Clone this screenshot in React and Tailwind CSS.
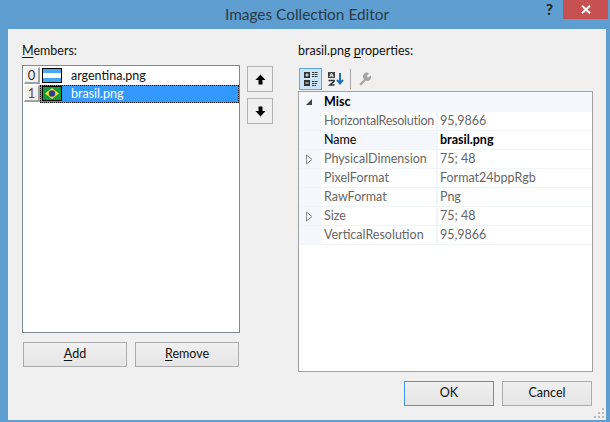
function U({ children }) {
  return <span className="underline underline-offset-2">{children}</span>;
}

function Btn({ children, className = "" }) {
  return (
    <div className={"flex items-center justify-center h-[25px] border border-[#acacac] bg-gradient-to-b from-[#f0f0f0] to-[#e5e5e5] text-[#111] " + className}>
      {children}
    </div>
  );
}

function Argentina() {
  return (
    <svg width="20" height="15" viewBox="0 0 20 15" className="block shrink-0">
      <rect width="20" height="15" fill="#000" />
      <rect x="1" y="1" width="18" height="13" fill="#fff" />
      <rect x="1" y="1" width="18" height="4" fill="#4aa8f0" />
      <rect x="1" y="10" width="18" height="4" fill="#4aa8f0" />
    </svg>
  );
}

function Brazil() {
  return (
    <svg width="20" height="15" viewBox="0 0 20 15" className="block shrink-0">
      <rect width="20" height="15" fill="#000" />
      <rect x="1" y="1" width="18" height="13" fill="#129a3c" />
      <polygon points="10,2 17,7.5 10,13 3,7.5" fill="#f4dc28" />
      <circle cx="10" cy="7.5" r="3.2" fill="#2f3f8f" />
    </svg>
  );
}

function RowHead({ n, amber }) {
  return (
    <div className={"w-[16px] h-[17px] shrink-0 flex items-center justify-center bg-[#f0f0f0] border-r-2 border-b-2 border-[#a0a0a0] border-l border-t border-l-white border-t-white text-[13px] leading-none " + (amber ? "text-[#7a4a10]" : "text-[#333]")}>
      {n}
    </div>
  );
}

function Triangle() {
  return (
    <svg width="9" height="11" viewBox="0 0 9 11" className="block">
      <path d="M1.5 1 L7 5.5 L1.5 10 Z" fill="#fff" stroke="#8a8a8a" />
    </svg>
  );
}

function PropRow({ name, value, expand, strong, tight }) {
  return (
    <div className="flex h-[19px] border-b border-[#f1f4fa]">
      <div className="w-[22px] shrink-0 bg-[#f5f7fc] flex items-center justify-center pr-[2px]">
        {expand && <Triangle />}
      </div>
      <div className={"w-[117px] shrink-0 pl-[3px] border-r-2 border-[#f1f4fa] leading-[17px] whitespace-nowrap " + (tight ? "tracking-[-0.25px] " : "") + (strong ? "bg-[#f5f7fc] text-black" : "text-[#666]")}>
        {name}
      </div>
      <div className={"pl-[2px] leading-[17px] " + (strong ? "font-bold text-black" : "text-[#666]")}>{value}</div>
    </div>
  );
}

export default function App() {
  return (
    <div className="w-[610px] h-[422px] overflow-hidden flex flex-col bg-[#5e9ed0] text-[12.5px] text-[#111]" style={{ fontFamily: 'Lato, sans-serif' }}>
      <div className="h-[29px] shrink-0 flex items-start relative">
        <div className="flex-1 text-center text-[15.4px] leading-[28px] text-[#2b3a48] pl-[4px]">
          Images Collection Editor
        </div>
        <div className="absolute right-[57px] top-0 text-[16px] font-bold leading-[18px] text-[#222]">?</div>
        <div className="absolute right-[2px] top-0 w-[45px] h-[19px] bg-[#c75050] flex items-center justify-center">
          <svg width="10" height="9" viewBox="0 0 10 9"><path d="M1 .8 L9 8.2 M9 .8 L1 8.2" stroke="#fff" strokeWidth="2" /></svg>
        </div>
      </div>

      <div className="ml-[8px] mr-[4px] h-[391px] bg-[#f0f0f0] flex pl-[14px] pr-[13px] pt-[14px] relative">
        <div className="w-[218px] shrink-0 flex flex-col">
          <div className="h-[22px] leading-[16px]"><U>M</U>embers:</div>
          <div className="h-[268px] border border-[#828790] bg-white pt-[1px] pl-[1px]">
            <div className="flex h-[18px] items-start">
              <RowHead n="0" />
              <div className="ml-[2px] mt-[1px]"><Argentina /></div>
              <div className="pl-[9px] leading-[18px] text-[#111]">argentina.png</div>
            </div>
            <div className="flex h-[18px] items-start">
              <RowHead n="1" amber />
              <div className="flex-1 h-[18px] flex items-start bg-[#3399ff] border border-dotted border-black text-white pl-[1px]">
                <Brazil />
                <div className="pl-[9px] leading-[16px]">brasil.png</div>
              </div>
            </div>
          </div>
          <div className="flex gap-[8px] mt-[9px] pl-[1px]">
            <Btn className="w-[104px]"><span><U>A</U>dd</span></Btn>
            <Btn className="w-[104px]"><span><U>R</U>emove</span></Btn>
          </div>
        </div>

        <div className="w-[58px] shrink-0 pl-[7px] pt-[23px] flex flex-col gap-[6px]">
          <div className="w-[26px] h-[26px] border border-[#b4b4b4] bg-[#f0f0f0] flex items-center justify-center">
            <svg width="11" height="11" viewBox="0 0 11 11"><path d="M5.5 .5 L10.5 6 H7.5 V10.5 H3.5 V6 H.5 Z" fill="#000" /></svg>
          </div>
          <div className="w-[26px] h-[26px] border border-[#b4b4b4] bg-[#f0f0f0] flex items-center justify-center">
            <svg width="11" height="11" viewBox="0 0 11 11"><path d="M5.5 10.5 L10.5 5 H7.5 V.5 H3.5 V5 H.5 Z" fill="#000" /></svg>
          </div>
        </div>

        <div className="w-[295px] shrink-0 flex flex-col">
          <div className="h-[24px] leading-[16px]">brasil.png <U>p</U>roperties:</div>
          <div className="h-[24px] flex items-center gap-[2px] pl-[1px]">
            <div className="w-[23px] h-[22px] bg-[#cce4f7] border border-[#5ea6e0] flex items-center justify-center">
              <svg width="16" height="16" viewBox="0 0 16 16">
                <rect x="1" y="1" width="6" height="6" fill="#333" />
                <rect x="1" y="9" width="6" height="6" fill="#333" />
                <path d="M2.4 4 H5.6 M4 2.4 V5.6 M2.4 12 H5.6" stroke="#fff" />
                <path d="M9 1.5 H15 M9 3.5 H15 M9 5.5 H15 M9 10.5 H15 M9 12.5 H14 M9 14.5 H13" stroke="#333" strokeDasharray="2.2 .5" />
              </svg>
            </div>
            <div className="w-[23px] h-[22px] flex items-center justify-center">
              <svg width="18" height="16" viewBox="0 0 18 16">
                <rect x="1" y="1" width="7" height="6" fill="#444" />
                <path d="M2.8 6 L4.5 2 L6.2 6 M3.4 4.8 H5.6" fill="none" stroke="#fff" strokeWidth="1" />
                <path d="M1.5 9.5 H7 V10.5 L3 14 H7.5" fill="none" stroke="#333" strokeWidth="1.6" />
                <path d="M13 2 V12 M10 8.8 L13 12.4 L16 8.8" fill="none" stroke="#1f6fb5" strokeWidth="2" />
              </svg>
            </div>
            <div className="w-px h-[20px] bg-[#a8a8a8] ml-[1px]" />
            <div className="w-[23px] h-[22px] flex items-center justify-center">
              <svg width="14" height="14" viewBox="0 0 14 14">
                <path d="M1.5 12 L6.2 7 A3.6 3.6 0 0 1 11 1.6 L8.6 4 L10 5.8 L12.8 3.6 A3.8 3.8 0 0 1 7.8 8.6 L3 13.5 Z" fill="#a3a3a3" />
              </svg>
            </div>
          </div>
          <div className="h-[281px] border border-[#a0a0a0] bg-white">
            <div className="flex h-[20px] bg-[#f5f7fc] items-center">
              <div className="w-[22px] shrink-0 flex justify-center pr-[2px]">
                <svg width="8" height="8" viewBox="0 0 8 8"><path d="M7 1 V7 H1 Z" fill="#444" /></svg>
              </div>
              <div className="pl-[3px] font-bold text-black">Misc</div>
            </div>
            <PropRow name="HorizontalResolution" value="95,9866" tight />
            <PropRow name="Name" value="brasil.png" strong />
            <PropRow name="PhysicalDimension" value="75; 48" expand />
            <PropRow name="PixelFormat" value="Format24bppRgb" />
            <PropRow name="RawFormat" value="Png" />
            <PropRow name="Size" value="75; 48" expand />
            <PropRow name="VerticalResolution" value="95,9866" />
          </div>
          <div className="flex justify-end gap-[8px] mt-[9px] pr-[1px]">
            <Btn className="w-[90px] !border-[#3d95ee]">OK</Btn>
            <Btn className="w-[90px]">Cancel</Btn>
          </div>
        </div>

        <svg width="12" height="12" viewBox="0 0 12 12" className="absolute right-[1px] bottom-[1px]">
          <path d="M9 1h2v2H9z M5 5h2v2H5z M9 5h2v2H9z M1 9h2v2H1z M5 9h2v2H5z M9 9h2v2H9z" fill="#b8b8b8" />
        </svg>
      </div>
    </div>
  );
}
